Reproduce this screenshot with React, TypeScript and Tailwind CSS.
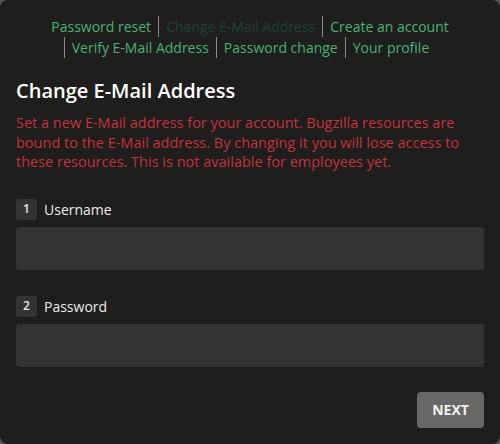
import React from "react";

const links = [
  { label: "Password reset", active: false },
  { label: "Change E-Mail Address", active: true },
  { label: "Create an account", active: false },
  { label: "Verify E-Mail Address", active: false },
  { label: "Password change", active: false },
  { label: "Your profile", active: false },
];

function Field({ n, label }: { n: number; label: string }) {
  return (
    <div className="flex flex-col">
      <div className="flex items-center gap-[7px] h-[21px]">
        <span className="w-[21px] h-[21px] rounded-[3px] bg-[#333333] text-[#e8e8e8] text-[12px] font-semibold flex items-center justify-center">
          {n}
        </span>
        <span className="text-[14px] text-[#ececec]">{label}</span>
      </div>
      <div className="mt-[7px] h-[43px] rounded-[4px] bg-[#333333]" />
    </div>
  );
}

export default function App() {
  return (
    <div
      className="w-[500px] h-[444px] bg-[#555555]"
      style={{ fontFamily: '"Open Sans", "Noto Sans", sans-serif' }}
    >
      <div className="w-full h-full rounded-[8px] bg-[#1e1e1d] flex flex-col px-4">
        <nav className="pt-[16px] px-[18px] text-center text-[14px] leading-[21px]">
          {links.map((l, i) => (
            <span
              key={l.label}
              className={`inline-block px-[7px] ${i === 0 ? "" : "border-l border-[#8a8a8a]"} ${
                l.active ? "text-[#1a4330]" : "text-[#48b374]"
              }`}
            >
              {l.label}
            </span>
          ))}
        </nav>

        <h1 className="mt-[20px] text-[20px] font-semibold text-white leading-[26px]">
          Change E-Mail Address
        </h1>
        <p className="mt-[9px] text-[14.5px] leading-[19.5px] text-[#c7313c]">
          Set a new E-Mail address for your account. Bugzilla resources are bound to the E-Mail
          address. By changing it you will lose access to these resources. This is not available
          for employees yet.
        </p>

        <div className="mt-[27px] flex flex-col gap-[26px]">
          <Field n={1} label="Username" />
          <Field n={2} label="Password" />
        </div>

        <div className="mt-[25px] flex justify-end">
          <button className="w-[67px] h-[36px] rounded-[4px] bg-[#686966] text-[#f2f2f2] text-[14px] font-bold">
            NEXT
          </button>
        </div>
      </div>
    </div>
  );
}
